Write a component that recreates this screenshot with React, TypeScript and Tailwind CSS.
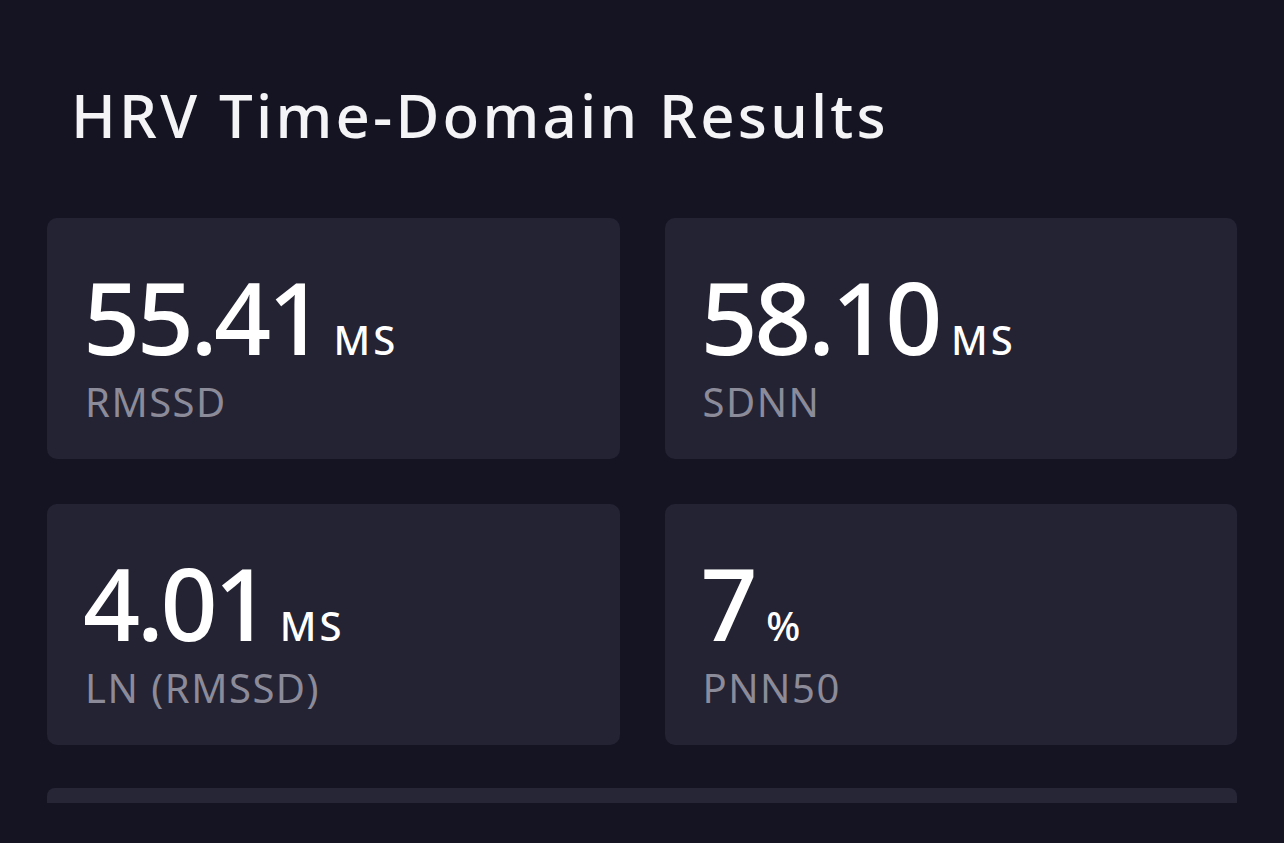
import React from 'react';

type Metric = { value: string; unit: string; label: string };

const metrics: Metric[] = [
  { value: '55.41', unit: 'MS', label: 'RMSSD' },
  { value: '58.10', unit: 'MS', label: 'SDNN' },
  { value: '4.01', unit: 'MS', label: 'LN (RMSSD)' },
  { value: '7', unit: '%', label: 'PNN50' },
];

function MetricCard({ m }: { m: Metric }) {
  return (
    <div className="h-[241px] rounded-[10px] bg-[#242334] pl-[36px] pt-[48px]">
      <div className="flex items-baseline gap-[12px]">
        <span className="text-[100px] font-medium leading-none tracking-[-3.5px] text-white">{m.value}</span>
        <span className="text-[40px] font-medium leading-none tracking-[3px] text-white">{m.unit}</span>
      </div>
      <div className="mt-[16px] pl-[2px] text-[40px] leading-none tracking-[1.5px] text-[#8c8b99]">{m.label}</div>
    </div>
  );
}

export default function App() {
  return (
    <div
      className="h-[843px] w-[1284px] overflow-hidden bg-[#151423] px-[47px] pt-[84px]"
      style={{ fontFamily: '"Noto Sans", Inter, sans-serif' }}
    >
      <h1 className="pl-[24px] text-[60px] font-medium leading-[62px] tracking-[3.2px] text-[#f4f4f6]">
        HRV Time-Domain Results
      </h1>
      <div className="mt-[72px] grid grid-cols-2 gap-[45px]">
        {metrics.map((m) => (
          <MetricCard key={m.label} m={m} />
        ))}
      </div>
      <div className="mt-[43px] h-[15px] rounded-t-[8px] bg-[#272636]" />
    </div>
  );
}
